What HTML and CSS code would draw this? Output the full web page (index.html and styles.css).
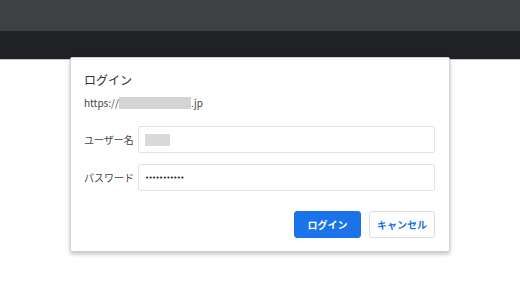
FILE: index.html
```html
<!DOCTYPE html>
<html lang="ja">
<head>
  <meta charset="UTF-8">
  <title>ログイン</title>
  <link rel="stylesheet" href="styles.css">
</head>
<body>
  <div class="toolbar"></div>
  <div class="tabstrip"></div>
  <div class="page"></div>

  <div class="dialog">
    <div class="title">ログイン</div>
    <div class="origin">https://<span class="masked"></span>.jp</div>

    <div class="fields">
      <div class="field">
        <label for="user">ユーザー名</label>
        <div class="input" id="user"><span class="masked-user"></span></div>
      </div>
      <div class="field">
        <label for="pass">パスワード</label>
        <div class="input" id="pass"><span class="dots">•••••••••••</span></div>
      </div>
    </div>

    <div class="actions">
      <button class="btn primary">ログイン</button>
      <button class="btn">キャンセル</button>
    </div>
  </div>
</body>
</html>
```

FILE: styles.css
```css
body {
  margin: 0;
  background: #fff;
  font-family: "Noto Sans CJK JP", "Noto Sans", sans-serif;
  color: #202124;
}
.toolbar {
  height: 31px;
  background: #3d4144;
}
.tabstrip {
  height: 28px;
  background: #202124;
}
.page {
  height: 1px;
  background: #c8c8c8;
}
.dialog {
  position: absolute;
  left: 70px;
  top: 57px;
  width: 380px;
  height: 195px;
  box-sizing: border-box;
  padding: 13px 14px 13px 13px;
  background: #fff;
  border: 1px solid #d0d0d0;
  border-radius: 2px;
  box-shadow: 0 2px 4px rgba(0,0,0,0.25);
  display: flex;
  flex-direction: column;
}
.title {
  font-size: 12px;
  line-height: 18px;
  color: #333;
}
.origin {
  margin-top: 6px;
  font-size: 10px;
  line-height: 16px;
  color: #444;
  display: flex;
  align-items: center;
}
.masked {
  display: inline-block;
  width: 72px;
  height: 12px;
  background: #d4d4d4;
}
.fields {
  margin-top: 15px;
  display: flex;
  flex-direction: column;
  gap: 11px;
}
.field {
  display: flex;
  align-items: center;
}
label {
  width: 54px;
  font-size: 10px;
  color: #444;
}
.input {
  flex: 1;
  height: 27px;
  box-sizing: border-box;
  border: 1px solid #e2e2e2;
  border-radius: 2px;
  padding: 0 6px;
  display: flex;
  align-items: center;
}
.masked-user {
  width: 25px;
  height: 12px;
  background: #dadada;
}
.dots {
  font-family: "DejaVu Sans", sans-serif;
  font-size: 7px;
  letter-spacing: -0.6px;
  color: #222;
}
.actions {
  margin-top: auto;
  display: flex;
  justify-content: flex-end;
  gap: 8px;
}
.btn {
  width: 66px;
  height: 27px;
  font-family: inherit;
  font-size: 10px;
  font-weight: 700;
  border-radius: 3px;
  border: 1px solid #dadce0;
  background: #fff;
  color: #1a73e8;
  padding: 0;
}
.btn.primary {
  width: 67px;
  background: #1a73e8;
  border-color: #1a73e8;
  color: #fff;
}
```
